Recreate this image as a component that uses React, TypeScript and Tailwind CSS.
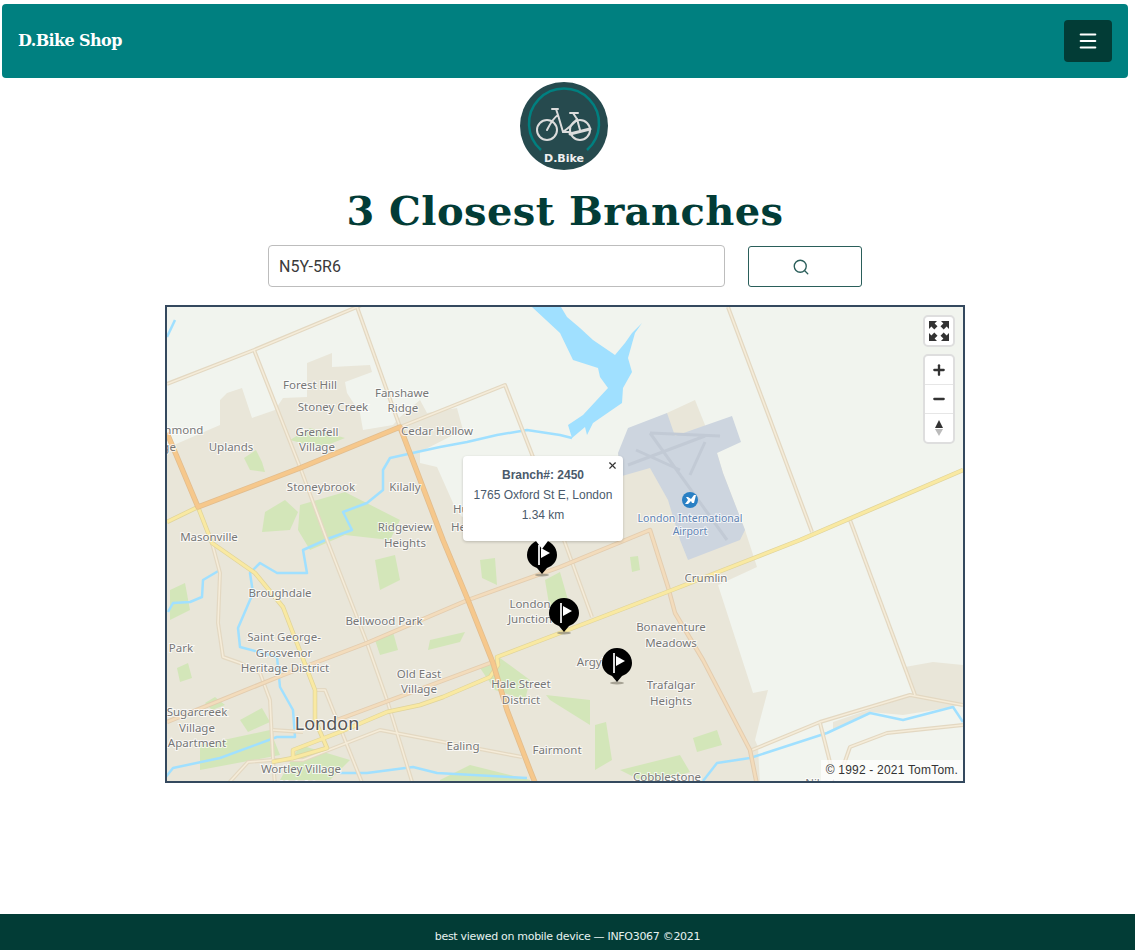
import React from 'react';
import { Menu, Search, X, Plus, Minus } from 'lucide-react';

const labels: [string, number, number][] = [
  ['Forest Hill', 310, 389], ['Stoney Creek', 333, 411], ['Fanshawe', 402, 397], ['Ridge', 403, 412],
  ['Uplands', 231, 451], ['Grenfell', 317, 436], ['Village', 317, 451], ['Cedar Hollow', 437, 435],
  ['Stoneybrook', 321, 491], ['Kilally', 405, 491], ['Ridgeview', 405, 531], ['Heights', 405, 547],
  ['Masonville', 209, 541], ['Broughdale', 280, 597], ['Saint George-', 284, 641], ['Grosvenor', 284, 657],
  ['Heritage District', 285, 672], ['Bellwood Park', 384, 625], ['Old East', 419, 678], ['Village', 419, 693],
  ['London', 530, 608], ['Junction', 530, 623], ['Hale Street', 521, 688], ['District', 521, 704],
  ['Sugarcreek', 197, 716], ['Village', 197, 732], ['Apartment', 197, 747], ['Wortley Village', 301, 773],
  ['Heights', 301, 789], ['Ealing', 463, 750], ['Fairmont', 557, 754], ['Argyle', 594, 666],
  ['Bonaventure', 671, 631], ['Meadows', 671, 647], ['Trafalgar', 671, 689], ['Heights', 671, 705],
  ['Crumlin', 706, 582], ['Cobblestone', 667, 781], ['Nilestown', 832, 787], ['Park', 181, 652],
  ['Huron', 470, 513], ['Heights', 472, 531], ['Richmond', 176, 434], ['Village', 158, 451],
];

const minorRoads = [
  'M167 384 L254 350 L357 307 L372 300',
  'M254 350 L300 467 L327 540 L367 643 L387 700 L413 785',
  'M357 307 L400 427',
  'M400 427 L505 385 L533 457 L565 543 L592 617',
  'M728 307 L812 532',
  'M850 520 L915 695',
  'M752 750 L820 722 L910 695 L963 705',
  'M820 723 L832 770',
  'M843 767 L850 747 L887 733 L963 725',
  'M212 543 L220 573 L218 623 L223 657 L240 663 L260 673 L270 700 L273 760 L275 785',
  'M273 730 L303 732',
  'M227 785 L248 762 L273 760 L303 760 L380 730 L443 742 L522 757',
  'M317 690 L325 690 L363 785',
];

const midRoads = [
  'M167 722 L283 675 L367 643 L468 600 L560 567 L650 530 L668 587 L675 613 L703 660 L750 750 L757 785',
  'M337 720 L493 662',
];

const majorRoads = ['M167 433 L198 507 L300 468 L400 427 L443 540 L468 600 L493 663 L507 710 L530 770 L536 785'];

const highways = [
  'M167 522 L198 507 L212 543 L255 573 L283 607 L315 690 L315 720 L327 748 L293 758 L293 750 L340 732 L387 712 L420 705 L443 697 L490 677 L498 665 L497 657 L560 633 L667 592 L800 540 L963 470',
  'M272 762 L293 758',
];

const rivers = [
  'M572 438 L560 435 L527 430 L497 435 L467 442 L440 447 L417 452 L390 458 L383 470 L383 490 L367 503 L343 512 L352 530 L330 538 L303 550 L307 573 L277 573 L260 563 L250 573 L253 593 L238 628 L240 647 L277 657 L280 687 L293 710 L295 737 L277 737 L220 758 L173 768 L165 778',
  'M220 570 L203 580 L202 597 L190 602 L173 603 L168 612',
  'M340 773 L367 773 L413 767 L437 773 L527 778',
  'M703 781 L717 763 L750 758 L827 733 L870 713 L903 720 L953 707 L963 722',
  'M175 320 L167 337',
];

const parks = [
  'M256 450 L262 462 L265 472 L250 470 L244 458 Z',
  'M290 440 L310 428 L345 438 L320 448 Z',
  'M265 512 L285 500 L298 512 L290 530 L262 532 Z',
  'M300 505 L345 492 L400 520 L390 540 L345 535 L310 550 L298 530 Z',
  'M375 560 L395 555 L400 580 L380 590 Z',
  'M170 590 L185 583 L190 610 L170 620 Z',
  'M375 640 L393 632 L398 650 L380 655 Z',
  'M430 640 L465 632 L460 642 L428 650 Z',
  'M480 668 L500 658 L530 680 L525 700 L495 690 Z',
  'M546 695 L590 700 L590 725 L550 700 Z',
  'M595 725 L606 722 L612 760 L595 770 Z',
  'M693 738 L717 730 L722 745 L697 752 Z',
  'M620 770 L680 755 L690 772 L650 785 Z',
  'M240 720 L262 708 L270 722 L248 732 Z',
  'M200 745 L270 730 L280 755 L200 770 Z',
  'M300 745 L350 760 L330 780 L280 780 Z',
  'M440 780 L470 765 L530 780 L530 790 L440 790 Z',
  'M480 560 L495 558 L497 585 L482 578 Z',
  'M545 580 L560 572 L568 600 L550 610 Z',
  'M177 668 L188 663 L192 678 L180 682 Z',
  'M630 557 L638 556 L640 570 L632 572 Z',
  'M205 703 L215 697 L225 705 L212 710 Z',
];

function Pin({ x, y }: { x: number; y: number }) {
  return (
    <g>
      <ellipse cx={x} cy={y + 20} rx={7} ry={1.5} fill="#8a8678" opacity={0.7} />
      <path
        d={`M${x} ${y + 19} L${x - 5} ${y + 13} C${x - 11} ${y + 11} ${x - 15} ${y + 6} ${x - 15} ${y} A15 15 0 1 1 ${x + 15} ${y} C${x + 15} ${y + 6} ${x + 11} ${y + 11} ${x + 5} ${y + 13} Z`}
        fill="#000"
      />
      <rect x={x - 4} y={y - 10} width={2} height={20} fill="#d8d8d8" />
      <path d={`M${x - 1} ${y - 7} L${x + 8} ${y - 2} L${x - 1} ${y + 3} Z`} fill="#fff" />
    </g>
  );
}

function MapCanvas() {
  return (
    <svg viewBox="167 307 796 474" width="796" height="474" className="block">
      <rect x="167" y="307" width="796" height="474" fill="#f1f4ee" />
      {/* built-up area */}
      <path
        d="M167 448 L220 425 L220 400 L227 393 L242 388 L252 418 L275 410 L283 398 L307 397 L307 363 L332 353 L332 367 L370 365 L372 372 L345 382 L347 393 L360 413 L363 430 L393 425 L400 417 L420 400 L427 413 L457 408 L463 430 L420 452 L420 463 L437 467 L453 503 L462 517 L618 470 L618 453 L667 413 L695 400 L705 425 L717 453 L723 473 L745 530 L757 567 L718 585 L753 693 L768 690 L760 720 L755 740 L758 747 L760 785 L167 785 Z"
        fill="#e9e6d9"
      />
      <path d="M905 667 L933 662 L963 665 L963 703 L953 707 L903 715 L870 712 L833 730 L833 722 L913 695 Z" fill="#e9e6d9" />
      {/* airport */}
      <path
        d="M618 453 L628 428 L667 413 L675 436 L732 416 L741 442 L717 453 L723 473 L745 530 L740 540 L688 560 L680 540 L668 500 L650 468 L622 476 Z"
        fill="#cdd5df"
      />
      <g fill="none" stroke="#c2cad5" strokeWidth="3">
        <path d="M650 433 L720 436 M650 433 L727 540 M628 465 L705 436 M636 450 L680 470 M690 475 L705 442" />
      </g>
      {parks.map((d, i) => (
        <path key={i} d={d} fill="#d3e6b9" />
      ))}
      <path
        d="M532 307 L561 307 L567 317 L580 328 L593 340 L615 355 L625 343 L632 333 L642 323 L635 333 L628 358 L632 372 L623 388 L622 403 L593 423 L587 435 L585 427 L572 438 L568 425 L583 415 L608 388 L600 377 L598 368 L573 360 L560 333 Z"
        fill="#a0e0ff"
      />
      <g fill="none" stroke="#a0e0ff" strokeWidth="2.5" strokeLinejoin="round">
        {rivers.map((d, i) => (
          <path key={i} d={d} />
        ))}
      </g>
      <g fill="none" strokeLinejoin="round">
        {minorRoads.map((d, i) => (
          <path key={i} d={d} stroke="#e3d8c2" strokeWidth="4" />
        ))}
        {minorRoads.map((d, i) => (
          <path key={i} d={d} stroke="#f5ecd9" strokeWidth="1.6" />
        ))}
        {midRoads.map((d, i) => (
          <path key={i} d={d} stroke="#e3cdb0" strokeWidth="4.5" />
        ))}
        {midRoads.map((d, i) => (
          <path key={i} d={d} stroke="#f3dcbc" strokeWidth="2.5" />
        ))}
        {highways.map((d, i) => (
          <path key={i} d={d} stroke="#e0d49a" strokeWidth="4.5" />
        ))}
        {highways.map((d, i) => (
          <path key={i} d={d} stroke="#f9e9a2" strokeWidth="3" />
        ))}
        {majorRoads.map((d, i) => (
          <path key={i} d={d} stroke="#e2bd8e" strokeWidth="5.5" />
        ))}
        {majorRoads.map((d, i) => (
          <path key={i} d={d} stroke="#f6c88c" strokeWidth="3.8" />
        ))}
      </g>
      <g
        fontFamily="'Noto Sans', sans-serif"
        fontSize="11.5"
        textAnchor="middle"
        fill="#777"
        stroke="#fff"
        strokeOpacity="0.75"
        strokeWidth="2"
        paintOrder="stroke"
      >
        {labels.map(([name, x, y], i) => (
          <text key={i} x={x} y={y}>
            {name}
          </text>
        ))}
        <text x="327" y="730" fontSize="18" fill="#555">London</text>
        <text x="690" y="522" fontSize="10.5" fill="#5f83b2">London International</text>
        <text x="690" y="535" fontSize="10.5" fill="#5f83b2">Airport</text>
      </g>
      <circle cx="690" cy="500" r="8" fill="#2a80c4" />
      <path d="M685 504 L688 500 L686 497 L688 497 L691 499 L694 495 L696 495 L695 499 L694 503 L692 503 L691 501 L688 504 Z" fill="#fff" />
      <Pin x={542} y={555} />
      <Pin x={564} y={613} />
      <Pin x={617} y={663} />
    </svg>
  );
}

function FullscreenIcon() {
  return (
    <svg viewBox="0 0 22 22" className="w-[22px] h-[22px]" fill="#333">
      <path d="M1 1 H9 L6.6 3.4 L9.5 6.3 L6.3 9.5 L3.4 6.6 L1 9 Z" />
      <path d="M21 1 H13 L15.4 3.4 L12.5 6.3 L15.7 9.5 L18.6 6.6 L21 9 Z" />
      <path d="M1 21 H9 L6.6 18.6 L9.5 15.7 L6.3 12.5 L3.4 15.4 L1 13 Z" />
      <path d="M21 21 H13 L15.4 18.6 L12.5 15.7 L15.7 12.5 L18.6 15.4 L21 13 Z" />
    </svg>
  );
}

function Logo() {
  return (
    <svg viewBox="0 0 88 88" className="w-[88px] h-[88px] block">
      <circle cx="44" cy="44" r="44" fill="#264a4e" />
      <path d="M21 68 A35 35 0 1 1 67 68" fill="none" stroke="#008080" strokeWidth="2.5" />
      <g fill="none" stroke="#dcdcdc" strokeWidth="2" strokeLinecap="round" strokeLinejoin="round">
        <circle cx="27" cy="48" r="10" />
        <circle cx="60" cy="48" r="10" />
        <path d="M27 48 C30 42 33 36 38 33 L43 50 C48 46 54 42 57 37 L60 48 M38 33 L36 27 M32 27 H38" />
        <path d="M43 50 L50 50 M53 31 L57 37 M50 31 H58" />
        <path d="M50 52 L70 47" strokeWidth="3" />
      </g>
      <text x="44" y="80" textAnchor="middle" fontFamily="'DejaVu Sans', sans-serif" fontSize="11" fontWeight="700" fill="#f0f0f0">
        D.Bike
      </text>
    </svg>
  );
}

export default function App() {
  return (
    <div className="min-h-[950px] flex flex-col bg-white overflow-hidden">
      <div className="w-[1130px] flex flex-col items-center">
        {/* Header */}
        <header className="w-[1126px] h-[74px] mt-1 px-4 rounded flex items-center justify-between bg-[#008080]">
          <span className="text-[16px] font-bold text-white font-['DejaVu_Serif',serif] tracking-[-0.6px]">D.Bike Shop</span>
          <button className="w-12 h-[42px] rounded bg-[#023c36] flex items-center justify-center text-white">
            <Menu className="w-[22px] h-[22px]" strokeWidth={2.2} />
          </button>
        </header>

        <div className="mt-1 -translate-x-px">
          <Logo />
        </div>

        <h1 className="mt-[17px] h-[48px] leading-[48px] text-[40px] font-bold text-[#023c36] font-['DejaVu_Serif',serif] tracking-[0.4px]">
          3 Closest Branches
        </h1>

        {/* Search */}
        <div className="mt-[10px] flex items-end gap-[23px]">
          <input
            readOnly
            value="N5Y-5R6"
            className="w-[457px] h-[42px] px-[10px] rounded border border-[#bdbdbd] text-base text-[#3a3a3a] font-['Roboto',sans-serif] outline-none"
          />
          <button className="w-[114px] h-[41px] rounded-[3px] border border-[#2a5e5a] flex items-center justify-center text-[#2a5e5a] pr-[8px]">
            <Search className="w-[18px] h-[18px]" strokeWidth={1.8} />
          </button>
        </div>

        {/* Map */}
        <div className="relative mt-[18px] w-[800px] h-[478px] border-2 border-[#34495e] overflow-hidden">
          <MapCanvas />

          <div className="absolute left-[296px] top-[149px] w-[160px] h-[85px] pt-[9px] bg-white rounded-sm shadow-[0_1px_3px_rgba(0,0,0,0.2)] text-center text-xs leading-5 text-[#4a5a6b] font-['Liberation_Sans',sans-serif]">
            <X className="absolute right-[5px] top-[4px] w-[11px] h-[11px] text-[#333]" strokeWidth={2.5} />
            <div className="font-bold">Branch#: 2450</div>
            <div>1765 Oxford St E, London</div>
            <div>1.34 km</div>
          </div>
          <div className="absolute left-[369px] top-[234px] w-0 h-0 border-x-[6px] border-x-transparent border-t-[8px] border-t-white" />

          <div className="absolute left-[756px] top-[8px] w-[32px] h-[32px] rounded-[5px] bg-white border-2 border-[#dedede] flex items-center justify-center">
            <FullscreenIcon />
          </div>

          <div className="absolute left-[756px] top-[47px] w-[32px] h-[90px] rounded-[5px] bg-white border-2 border-[#dedede] flex flex-col text-[#333]">
            <div className="h-[29px] flex items-center justify-center border-b border-[#e6e6e6]">
              <Plus className="w-4 h-4" strokeWidth={3.5} />
            </div>
            <div className="h-[29px] flex items-center justify-center border-b border-[#e6e6e6]">
              <Minus className="w-4 h-4" strokeWidth={3.5} />
            </div>
            <div className="flex-1 flex flex-col items-center justify-center gap-px">
              <span className="w-0 h-0 border-x-[4px] border-x-transparent border-b-[8px] border-b-[#333]" />
              <span className="w-0 h-0 border-x-[4px] border-x-transparent border-t-[7px] border-t-[#bbb]" />
            </div>
          </div>

          <div className="absolute right-0 bottom-0 h-[21px] pl-[5px] pr-[5px] bg-white/70 text-xs leading-[21px] tracking-[0.2px] text-[#333] font-['Liberation_Sans',sans-serif]">
            © 1992 - 2021 TomTom.
          </div>
        </div>
      </div>

      {/* Footer */}
      <footer className="mt-auto h-9 pt-[10px] bg-[#023c36] flex items-center justify-center text-[11px] text-[#e6f2f0] font-['DejaVu_Sans',sans-serif] tracking-[-0.3px]">
        best viewed on mobile device — INFO3067 ©2021
      </footer>
    </div>
  );
}
